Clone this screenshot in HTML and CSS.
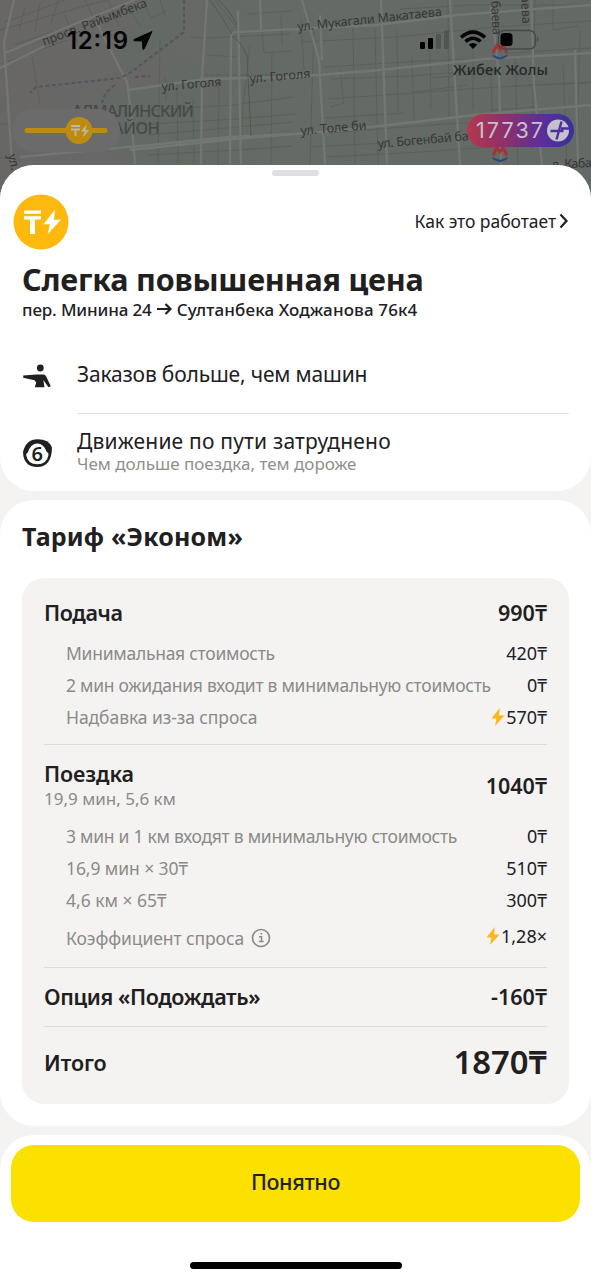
FILE: index.html
```html
<!DOCTYPE html>
<html lang="ru">
<head>
<meta charset="utf-8">
<title>Слегка повышенная цена</title>
<link rel="stylesheet" href="styles.css">
</head>
<body>
<div class="phone">
  <header class="map">
    <svg class="map-art" width="591" height="210" viewBox="0 0 591 210">
      <defs>
        <linearGradient id="ground" x1="0" x2="1" y1="0" y2="0">
          <stop offset="0" stop-color="#696765"/><stop offset=".25" stop-color="#676866"/><stop offset=".45" stop-color="#646a65"/><stop offset="1" stop-color="#636964"/>
        </linearGradient>
        <linearGradient id="plus" x1="0" x2="1" y1="0" y2="0">
          <stop offset="0" stop-color="#b4384c"/><stop offset=".35" stop-color="#8e2f6c"/><stop offset=".7" stop-color="#5b2f99"/><stop offset="1" stop-color="#38309c"/>
        </linearGradient>
      </defs>
      <rect width="591" height="210" fill="url(#ground)"/>
      <path d="M145 0h35v35l-50 36-12-15zM105 95l55-8 18-25h20l8 125h-70z" fill="#606a62" opacity=".45"/>
      <g class="street">
        <path d="M0 30l120-34M14 45l50-17M7 62l60-22M5 22l60-22M25 7l-6 24M40 2l-5 30M58 0l-7 24M64 14l14 29M85 0l14 30M108 0l11 26M32 57l8 47M130 10l10 16M143 0l8 18 15-7M0 124h10M0 158l14 1"/>
        <path d="M160 0l5 16M160 40l-2 124M190 37l15 1 85-4M177 84l1 80M193 98l1 66M219 75l-1 90M250 45l-7 60-2 59M262 33l2 20 28-2M272 52l-1 112M281 15l1 29M148 110l85-5 60-8M135 125l100-6 60-5M147 135l80-7 66-6M147 155l90-5 55-4M205 75l80 0M207 55l30 2M215 0l22 28M243 33l20-3M165 77l1 25M247 14l45-3"/>
        <path d="M301 20l3 50M314 30l-2 60-2 74M340 70l4 33-14 4M353 25l2 139M375 28l3 137M397 30l1 82M412 58l2 64M430 50l1 60M448 0l1 120M473 50l0 60M491 75l2 75M515 55l3 110M535 0l-3 150M553 0l0 30 25-4M563 65l4 100M580 30l-3 130"/>
        <path d="M300 42l95-5 100-10 96-6M325 67l95-6 60-2M330 79l80-3 90-7M328 99l70-5 100-7 93-5M325 118l80-5M330 133l100-8 140-8M310 147l75-4M325 157l80-4 90-6M400 9l70-4 120 0M414 92l53-7M430 78l70-6M510 53l81-5M512 86l78-3M338 28l13-2M490 110l45-3"/>
      </g>
      <g class="road">
        <path d="M14 0L4 42 12 164M5 53l60-25 70-28M0 68l45-22M207 0l-5 78-1 86M260 0l1 30M238 10l3 154M302 0l17 60 6 104M320 15l2 45M381 0l6 164M450 0l10 165M491 5l8 70 2 90M531 0l3 85 8 80M575 50l3 115M96 22l31 60 4 30 4 52"/>
        <path d="M128 90l77-11 85-2 80-6 115-12 106-6M130 150l105-11 110-9 130-15 116-10M20 157l130-12 80-8 80-4M230 164l1-127q0-5 6-5l140-7 80-10 134-10"/>
      </g>
      <path d="M184 0v32L130 73l-10 5-84 9-6 6M115 85q-11 7-13 18M135 77l15-1" fill="none" stroke="#51575a" stroke-width="2" stroke-dasharray="4 2.5"/>
      <path d="M232 36q9 5 15 20l4 80M210 0q13 18 22 34M219 0q13 14 18 25" fill="none" stroke="#535950" stroke-width="1"/>
      <g class="map-label">
        <text x="0" y="0" transform="translate(44 46) rotate(-21)" textLength="111">просп. Райымбека</text>
        <text x="162" y="91" transform="rotate(-5 162 91)" textLength="60">ул. Гоголя</text>
        <text x="250" y="83" transform="rotate(-5 250 83)" textLength="61">ул. Гоголя</text>
        <text x="298" y="31" transform="rotate(-6 298 31)" textLength="145">ул. Мукагали Макатаева</text>
        <text x="301" y="135" transform="rotate(-5 301 135)" textLength="66">ул. Толе би</text>
        <text x="378" y="148" transform="rotate(-5 378 148)" textLength="106">ул. Богенбай баты</text>
        <text x="552" y="169" transform="rotate(-3 552 169)" textLength="40">л. Каба</text>
        <text x="0" y="0" transform="translate(491 1) rotate(87)" textLength="34">баева</text>
        <text x="0" y="0" transform="translate(521 -4) rotate(87)" textLength="28">аева</text>
        <text x="0" y="0" transform="translate(8 155) rotate(78)">ул. С</text>
      </g>
      <g class="district">
        <text x="72" y="117" textLength="122">АЛМАЛИНСКИЙ</text>
        <text x="104" y="134" textLength="56">РАЙОН</text>
      </g>
      <text class="station" x="453" y="75" textLength="95">Жибек Жолы</text>
      <g id="metro"><path d="M493 53l4-8 3 4.500 3-4.500 4 8" fill="none" stroke="#a93034" stroke-width="2.800"/><path d="M491.500 54.500l8.500 3 8.500-3-2.500 3-6 2.200-6-2.200z" fill="#254a83"/></g>
      <use href="#metro" x="0" y="102.500"/>
      <rect x="12" y="109" width="108" height="43" rx="21.500" fill="#6c6b6c"/>
      <path d="M27 130.500h78" stroke="#bd8b0d" stroke-width="5" stroke-linecap="round"/>
      <circle cx="79" cy="130.500" r="13.500" fill="#bd8b0d"/>
      <path d="M71 126h9M71 129.500h9M75.500 129.500v6.500" stroke="#bbb5aa" stroke-width="1.800"/><path d="M87 124l-6 7.500h3.500l-1.500 6 6-7.500h-3.500z" fill="#bbb5aa"/>
      <rect x="467" y="114" width="107" height="33" rx="16.500" fill="url(#plus)"/>
      <text class="points" x="476" y="138" textLength="67">17737</text>
      <circle cx="558" cy="130.500" r="11" fill="#c4c1cc"/>
      <path d="M561.500 121.500l-5 18M550.500 131h13M561 128.500h8" stroke="#4e309c" stroke-width="2.400" fill="none"/>
      <text class="clock" x="67" y="49" textLength="61">12:19</text>
      <path d="M152 31.500L134 39.500q-1 .8.200 1.200l8.300.3.300 8q.5 1.200 1.300 0z" fill="#050505" stroke="#050505" stroke-linejoin="round"/>
      <rect x="420" y="42" width="5" height="7" rx="1.300"/><rect x="428" y="38" width="5" height="11" rx="1.300"/>
      <rect x="436" y="34" width="5" height="15" rx="1.300" fill="#515451"/><rect x="444" y="30.500" width="5" height="18.500" rx="1.300" fill="#515451"/>
      <g fill="none" stroke="#050505" stroke-width="3.600"><path d="M461 37.300q12-10.500 24 0"/><path d="M465.500 41.500q7.500-6.500 15 0"/></g><path d="M468.700 44.600q4.300-3.200 8.600 0l-4.300 4.400z"/>
      <rect x="498.500" y="30.500" width="37" height="18.500" rx="6" fill="none" stroke="#464946" stroke-width="1.300"/><rect x="500.500" y="33" width="12" height="13" rx="3.500"/><path d="M537 37q3 2.500 0 5z" fill="#464946"/>
    </svg>
  </header>

  <main class="sheet">
    <section class="panel intro">
      <i class="grabber"></i>
      <div class="topline">
        <svg class="badge" width="56" height="56" viewBox="0 0 56 56"><circle cx="28" cy="28" r="27.500" fill="#fdb90d"/><path d="M11 18.200h17M11 23.800h17" stroke="#fff" stroke-width="3.200"/><path d="M19.500 24v16" stroke="#fff" stroke-width="5"/><path d="M42 15.500L30.500 30.200h6.500l-2.500 10L48 25.700h-7z" fill="#fff"/></svg>
        <a class="how"><span>Как это работает</span><svg width="10" height="16" viewBox="0 0 10 16"><path d="M1.500 1.500L7.500 8l-6 6.500" fill="none" stroke="#21201f" stroke-width="2.200"/></svg></a>
      </div>
      <h1>Слегка повышенная цена</h1>
      <p class="route"><span class="from">пер. Минина 24</span><svg width="17" height="12" viewBox="0 0 17 12"><path d="M1 6h14M9.500 1l5 5-5 5" fill="none" stroke="#21201f" stroke-width="2.200"/></svg><span class="to">Султанбека Ходжанова 76к4</span></p>
      <div class="reason">
        <svg class="icon" width="30" height="30" viewBox="0 0 30 30" fill="#21201f"><circle cx="18.300" cy="7" r="3.400"/><path d="M1.200 14.600v2.200l11.300 2.400 1.700 2.300-1.400 4.700h9.700l-1.200-7.200 5.200 7.200 2.300-1-4.500-9.500q-1-2-3-2.100h-7z"/></svg>
        <p class="cause one">Заказов больше, чем машин</p>
      </div>
      <div class="reason second">
        <svg class="icon jam" width="30" height="30" viewBox="0 0 30 30"><path d="M1 14Q4 1.300 15.500 1.300T30 9.500Q29.600 29 15.300 29 1.600 29 1 14z" fill="#21201f"/><path d="M15.300 5.500q6.500 0 9.500 8.500 2 .500 1.700 3-1.700 9.300-11.200 9.300T4.100 17q0-2 1.700-2.500Q8.800 5.500 15.300 5.500z" fill="#fff"/><text x="15.300" y="23.200" text-anchor="middle">6</text></svg>
        <div><p class="cause two">Движение по пути затруднено</p><p class="note">Чем дольше поездка, тем дороже</p></div>
      </div>
    </section>

    <section class="panel tariff">
      <h2>Тариф «Эконом»</h2>
      <div class="bill">
        <div class="row head first"><b class="snug">Подача</b><b>990₸</b></div>
        <div class="row"><span class="tight">Минимальная стоимость</span><span class="sum">420₸</span></div>
        <div class="row"><span class="tight">2 мин ожидания входит в минимальную стоимость</span><span class="sum">0₸</span></div>
        <div class="row"><span class="near">Надбавка из-за спроса</span><span class="sum"><svg class="bolt" width="14" height="18" viewBox="0 0 14 18"><path d="M8.700 0L.5 10.500h5L4 18l9.500-10.500H8z" fill="#fcb718"/></svg>570₸</span></div>
        <hr>
        <div class="row head trip"><div><b class="near">Поездка</b><p>19,9 мин, 5,6 км</p></div><b>1040₸</b></div>
        <div class="row"><span class="tight">3 мин и 1 км входят в минимальную стоимость</span><span class="sum">0₸</span></div>
        <div class="row"><span class="near">16,9 мин × 30₸</span><span class="sum">510₸</span></div>
        <div class="row"><span>4,6 км × 65₸</span><span class="sum">300₸</span></div>
        <div class="row coef"><span class="near label">Коэффициент спроса</span><svg class="info" width="20" height="20" viewBox="0 0 20 20"><circle cx="10" cy="10" r="8.500" fill="none" stroke="#8b8a88" stroke-width="1.700"/><path d="M8 8.800h2.500v4.500M7.800 13.500h4.800M9.500 5.700h1.700" stroke="#8b8a88" stroke-width="1.500" fill="none"/></svg><span class="sum"><svg class="bolt" width="14" height="18" viewBox="0 0 14 18"><path d="M8.700 0L.5 10.500h5L4 18l9.500-10.500H8z" fill="#fcb718"/></svg>1,28×</span></div>
        <hr>
        <div class="row head option"><b class="snug">Опция «Подождать»</b><b>-160₸</b></div>
        <hr>
        <div class="row head total"><b class="near">Итого</b><b class="grand">1870₸</b></div>
      </div>
    </section>

    <footer class="panel actions">
      <button>Понятно</button>
      <i class="home"></i>
    </footer>
  </main>
</div>
</body>
</html>
```
FILE: styles.css
```css
* { box-sizing: border-box; }
body { margin: 0; font-family: "Noto Sans", sans-serif; color: #21201f; background: #f4f3f1; }
h1, h2, p { margin: 0; }
i { display: block; }
svg { display: block; flex: none; }
.phone { width: 591px; height: 1280px; overflow: hidden; }

.map { height: 165px; }
.street { fill: none; stroke: #555b52; stroke-width: 1; opacity: .6; }
.road { fill: none; stroke: #737771; stroke-width: 2.3; }
.map-label { font-size: 12.500px; fill: #353736; }
.district { font-size: 16.500px; font-weight: 500; fill: #474948; }
.station { font-size: 14.500px; font-weight: 500; fill: #262827; }
.points { font-family: Inter, sans-serif; font-size: 21.500px; fill: #cbc1cc; }
.clock { font-family: Inter, sans-serif; font-size: 24px; font-weight: 600; fill: #050505; }

.sheet { position: relative; display: flex; flex-direction: column; gap: 9px; height: 1115px; background: #f4f3f1; border-radius: 34px 34px 0 0; }
.panel { background: #fff; border-radius: 34px; }
.intro { height: 326px; padding: 5px 22px 0; }
.grabber { width: 47px; height: 6px; margin: 0 auto; border-radius: 3px; background: #dfdee0; }
.topline { display: flex; justify-content: space-between; align-items: center; height: 56px; margin: 18px 0 0 -9px; }
.how { display: flex; align-items: center; gap: 3px; padding-bottom: 2px; font-size: 17.500px; letter-spacing: -.05px; }
h1 { height: 44px; margin-top: 7px; font-size: 30.500px; line-height: 44px; font-weight: 700; letter-spacing: -.18px; white-space: nowrap; }
.route { display: flex; align-items: center; gap: 4px; height: 22px; margin-top: -3px; font-size: 17px; font-weight: 500; white-space: nowrap; }
.from { letter-spacing: -.14px; }
.to { letter-spacing: .14px; }
.reason { display: flex; gap: 25px; height: 93px; padding-top: 39px; }
.reason.second { height: 76px; padding-top: 13px; }
.reason .icon { margin-top: 2px; }
.reason .jam { margin-top: 11.5px; }
.jam text { font-size: 20px; font-weight: 600; fill: #21201f; }
.cause { font-size: 21px; line-height: 30px; white-space: nowrap; }
.one { width: 492px; height: 55px; border-bottom: 1px solid #e3e2e1; letter-spacing: -.17px; }
.two { letter-spacing: .2px; }
.note { margin-top: -4px; font-size: 17px; line-height: 23px; color: #908f8d; white-space: nowrap; }

.tariff { height: 626px; padding: 17px 22px 22px; }
h2 { height: 38px; margin-bottom: 23px; font-size: 25px; line-height: 38px; font-weight: 700; letter-spacing: .2px; }
.bill { height: 526px; padding: 20px 22px; border-radius: 22px; background: #f4f3f1; }
.row { display: flex; align-items: center; height: 32px; padding-left: 22px; font-size: 17.500px; color: #8b8a88; white-space: nowrap; }
.row .sum { display: flex; align-items: center; gap: 1px; margin-left: auto; color: #21201f; font-size: 18px; }
.tight { letter-spacing: -.27px; }
.near { letter-spacing: -.08px; }
.head { justify-content: space-between; padding-left: 0; color: #21201f; font-size: 21.500px; }
.head b { font-weight: 600; }
.head .snug { letter-spacing: -.38px; }
.first { height: 39px; padding-bottom: 10px; }
hr { height: 1px; margin: 0; border: 0; background: #dddcda; }
.bill > hr { margin-top: 11px; }
.trip { height: 75px; padding-top: 6px; }
.trip p { font-size: 17px; line-height: 20px; color: #8b8a88; }
.trip div { padding-bottom: 4px; }
.trip div b { display: block; line-height: 30px; }
.coef { height: 40px; }
.coef .label { padding-top: 4px; }
.coef .info { margin: 4px 0 0 7px; }
.option { height: 58px; padding-bottom: 1px; }
.bill > .option + hr { margin-top: 0; }
.total { height: 72px; padding-bottom: 2px; }
.total .grand { padding-bottom: 2px; font-size: 32.800px; font-weight: 600; }

.actions { display: flex; flex-direction: column; align-items: center; height: 145px; padding-top: 10px; border-radius: 34px 34px 0 0; }
button { width: 569px; height: 77px; padding: 0 0 4px; border: 0; border-radius: 23px; background: #fbe100; color: #21201f; font: 500 21.500px/73px "Noto Sans", sans-serif; letter-spacing: -.35px; }
.home { width: 212px; height: 7px; margin-top: 40px; border-radius: 4px; background: #000; }
```
